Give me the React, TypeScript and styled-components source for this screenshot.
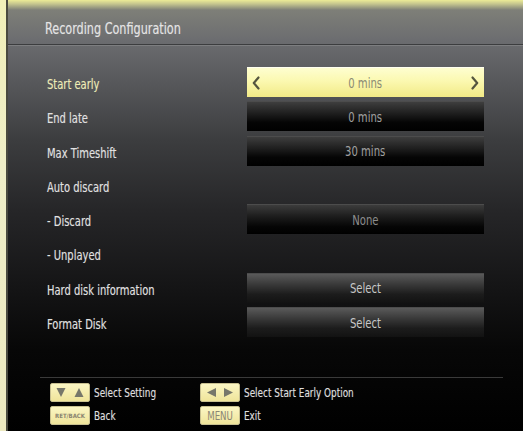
import styled, { createGlobalStyle } from 'styled-components';

const GlobalStyle = createGlobalStyle`
  html, body {
    margin: 0;
    padding: 0;
    background: #000;
  }
  body {
    font-family: "DejaVu Sans Condensed", "Liberation Sans", sans-serif;
  }
`;

type BoxKind = 'active' | 'dark' | 'muted' | 'button';

type Row = {
  label: string;
  value?: string;
  kind?: BoxKind;
  highlight?: boolean;
};

const rows: Row[] = [
  { label: 'Start early', value: '0 mins', kind: 'active', highlight: true },
  { label: 'End late', value: '0 mins', kind: 'dark' },
  { label: 'Max Timeshift', value: '30 mins', kind: 'dark' },
  { label: 'Auto discard' },
  { label: '- Discard', value: 'None', kind: 'muted' },
  { label: '- Unplayed' },
  { label: 'Hard disk information', value: 'Select', kind: 'button' },
  { label: 'Format Disk', value: 'Select', kind: 'button' },
];

const Chevron = ({ dir }: { dir: 'left' | 'right' }) => (
  <svg width="8" height="14" viewBox="0 0 8 14">
    <polyline
      points={dir === 'left' ? '6.5,1.5 1.8,7 6.5,12.5' : '1.5,1.5 6.2,7 1.5,12.5'}
      fill="none"
      stroke="#55553f"
      strokeWidth="2.2"
      strokeLinecap="round"
      strokeLinejoin="round"
    />
  </svg>
);

const Triangle = ({ dir }: { dir: 'up' | 'down' | 'left' | 'right' }) => {
  const pts = {
    up: '5,1 9.5,10 0.5,10',
    down: '0.5,1 9.5,1 5,10',
    left: '1,5.5 10,1 10,10',
    right: '0,1 9,5.5 0,10',
  }[dir];
  return (
    <svg width="10" height="11" viewBox="0 0 10 11">
      <polygon points={pts} fill="#77776a" />
    </svg>
  );
};

const App = () => {
  return (
    <>
      <GlobalStyle />
      <Screen>
        <LeftBezel />
        <Panel>
          <Header>
            <Title>Recording Configuration</Title>
          </Header>
          <List>
            {rows.map((row) => (
              <SettingRow key={row.label}>
                <Label $highlight={row.highlight}>{row.label}</Label>
                {row.kind && (
                  <ValueBox $kind={row.kind}>
                    {row.kind === 'active' && <Chevron dir="left" />}
                    <ValueText $kind={row.kind}>{row.value}</ValueText>
                    {row.kind === 'active' && <Chevron dir="right" />}
                  </ValueBox>
                )}
              </SettingRow>
            ))}
          </List>
          <Footer>
            <HintGrid>
              <Hint>
                <Key>
                  <Triangle dir="down" />
                  <Triangle dir="up" />
                </Key>
                <HintText>Select Setting</HintText>
              </Hint>
              <Hint>
                <Key>
                  <Triangle dir="left" />
                  <Triangle dir="right" />
                </Key>
                <HintText>Select Start Early Option</HintText>
              </Hint>
              <Hint>
                <Key>
                  <KeyText $tiny>RET/BACK</KeyText>
                </Key>
                <HintText>Back</HintText>
              </Hint>
              <Hint>
                <Key>
                  <KeyText>MENU</KeyText>
                </Key>
                <HintText>Exit</HintText>
              </Hint>
            </HintGrid>
          </Footer>
        </Panel>
      </Screen>
    </>
  );
};

export default App;

const Screen = styled.div`
  width: 523px;
  height: 431px;
  display: flex;
  overflow: hidden;
  background: #000;
`;

const LeftBezel = styled.div`
  width: 6px;
  flex-shrink: 0;
  background: linear-gradient(to bottom, #f1f0b8 0%, #efeec8 40%, #ece9c0 100%);
  border-right: 2px solid #4a4a40;
`;

const Panel = styled.div`
  flex: 1;
  display: flex;
  flex-direction: column;
  background: linear-gradient(
    to bottom,
    #eceb96 0px,
    #c4c48e 4px,
    #7e7f78 10px,
    #6c6d70 40px,
    #58595c 80px,
    #3c3d3f 140px,
    #262628 210px,
    #141415 290px,
    #070707 350px,
    #000 431px
  );
`;

const Header = styled.div`
  height: 34px;
  margin-top: 10px;
  padding-left: 37px;
  display: flex;
  align-items: center;
  border-bottom: 1px solid #3c3d3f;
  box-shadow: 0 1px 0 #7d7e80;
`;

const Title = styled.div`
  color: #e4e4e4;
  font-size: 16px;
  padding-top: 3px;
  transform: scaleX(0.78);
  transform-origin: left center;
  white-space: nowrap;
  text-shadow: 0 0 1px rgba(255, 255, 255, 0.3);
`;

const List = styled.div`
  margin-top: 22px;
  display: flex;
  flex-direction: column;
`;

const SettingRow = styled.div`
  height: 34.3px;
  display: grid;
  grid-template-columns: 200px 237px;
  padding-left: 39px;
  align-items: start;
`;

const Label = styled.div<{ $highlight?: boolean }>`
  color: ${(p) => (p.$highlight ? '#f0eeb2' : '#e2e2e2')};
  font-size: 14px;
  line-height: 30px;
  padding-top: 2px;
  white-space: nowrap;
  transform: scaleX(0.79);
  transform-origin: left center;
  text-shadow: 0 0 1px rgba(255, 255, 255, 0.25);
`;

const boxBackgrounds: Record<BoxKind, string> = {
  active: 'linear-gradient(to bottom, #fefed0 0%, #fbf8b0 45%, #f2ea86 100%)',
  dark: 'linear-gradient(to bottom, #3e3e3e 0%, #1e1e1e 40%, #050505 70%, #000 100%)',
  muted: 'linear-gradient(to bottom, #3c3c3c 0%, #1c1c1c 40%, #050505 75%, #000 100%)',
  button: 'linear-gradient(to bottom, #5a5a5a 0%, #3a3a3a 35%, #1c1c1c 70%, #121212 100%)',
};

const ValueBox = styled.div<{ $kind: BoxKind }>`
  height: 30px;
  display: flex;
  align-items: center;
  justify-content: ${(p) => (p.$kind === 'active' ? 'space-between' : 'center')};
  padding: 0 5px;
  box-sizing: border-box;
  background: ${(p) => boxBackgrounds[p.$kind]};
  border-top: 1px solid ${(p) => (p.$kind === 'active' ? '#fffff0' : '#4c4c4c')};
`;

const valueColors: Record<BoxKind, string> = {
  active: '#8a8a74',
  dark: '#a0a0a0',
  muted: '#8c8c8c',
  button: '#c8c8c8',
};

const ValueText = styled.span<{ $kind: BoxKind }>`
  display: inline-block;
  color: ${(p) => valueColors[p.$kind]};
  font-size: 14px;
  white-space: nowrap;
  transform: scaleX(0.8);
`;

const Footer = styled.div`
  margin-top: auto;
  margin-left: 32px;
  margin-right: 20px;
  padding: 5px 0 6px 10px;
  border-top: 1px solid #3a3a3a;
`;

const HintGrid = styled.div`
  display: grid;
  grid-template-columns: 150px 1fr;
  row-gap: 4px;
`;

const Hint = styled.div`
  display: flex;
  align-items: center;
  gap: 4px;
  height: 19px;
`;

const Key = styled.div`
  width: 40px;
  height: 19px;
  box-sizing: border-box;
  display: flex;
  align-items: center;
  justify-content: center;
  gap: 8px;
  background: linear-gradient(to bottom, #fbf6c4, #efe49a);
  border: 1px solid #c8c090;
  border-radius: 2px;
`;

const KeyText = styled.span<{ $tiny?: boolean }>`
  display: inline-block;
  color: ${(p) => (p.$tiny ? '#8a8470' : '#8a8674')};
  font-size: ${(p) => (p.$tiny ? '6px' : '12px')};
  font-weight: ${(p) => (p.$tiny ? 700 : 400)};
  transform: ${(p) => (p.$tiny ? 'none' : 'scaleX(0.8)')};
`;

const HintText = styled.span`
  display: inline-block;
  color: #e0e0e0;
  font-size: 13px;
  white-space: nowrap;
  transform: scaleX(0.76);
  transform-origin: left center;
  text-shadow: 0 0 1px rgba(255, 255, 255, 0.25);
`;
